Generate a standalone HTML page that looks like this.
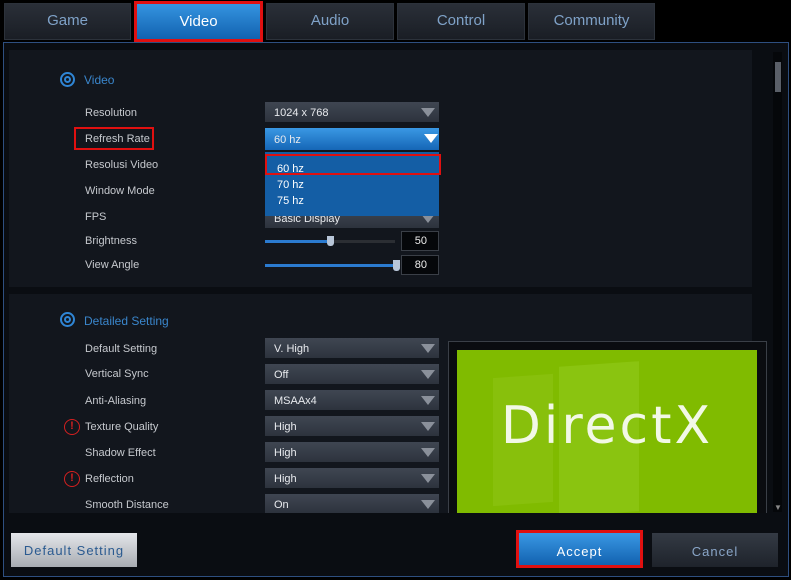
<!DOCTYPE html>
<html><head><style>
*{margin:0;padding:0;box-sizing:border-box}
body{width:791px;height:580px;background:#000;position:relative;overflow:hidden;font-family:"Liberation Sans",sans-serif;font-size:11px;color:#c8ccd2}
.a{position:absolute}
.tab{position:absolute;top:3px;height:37px;background:linear-gradient(#2a2f38,#1a1e25);border:1px solid #2c323b;color:#7fa2c8;font-size:15px;text-align:center;line-height:34px}
.dd{position:absolute;left:265px;width:174px;height:20px;background:linear-gradient(#3f4652,#2d333d);color:#e8eaee;font-size:11px;line-height:22px;padding-left:9px}
.dd:after{content:"";position:absolute;right:4px;top:6px;border-left:7px solid transparent;border-right:7px solid transparent;border-top:9px solid #8a909a}
.dd.nb:after{display:none}
.lb{position:absolute;left:85px;font-size:11px;color:#c6c9ce}
.ic{position:absolute;left:60px;width:15px;height:15px;border:2px solid #2f86d6;border-radius:50%}
.ic:after{content:"";position:absolute;left:2px;top:2px;width:7px;height:7px;border:2px solid #2f86d6;border-radius:50%;box-sizing:border-box}
.wr{position:absolute;left:64px;width:16px;height:16px;border:1.5px solid #d42020;border-radius:50%;color:#d42020;font-size:11px;font-weight:bold;text-align:center;line-height:13px}
</style></head><body>
<div class="tab" style="left:4px;width:127px">Game</div>
<div class="tab" style="left:134px;width:129px;background:linear-gradient(#3594e0,#1262b0);color:#fff;border:3px solid #e01010;line-height:36px;height:41px;top:1px">Video</div>
<div class="tab" style="left:266px;width:128px">Audio</div>
<div class="tab" style="left:397px;width:128px">Control</div>
<div class="tab" style="left:528px;width:127px">Community</div>
<div class="a" style="left:3px;top:42px;width:786px;height:535px;border:1px solid #2e4f80;background:#0a0d12"></div>
<div class="a" style="left:9px;top:50px;width:743px;height:237px;background:#12161d"></div>
<div class="a" style="left:9px;top:294px;width:743px;height:219px;background:#12161d"></div>
<div class="a" style="left:773px;top:52px;width:9px;height:460px;background:#05070a"></div>
<div class="a" style="left:775px;top:62px;width:6px;height:30px;background:#5a5f68"></div>
<div class="a" style="left:774px;top:503px;color:#888;font-size:8px">▼</div>

<div class="ic" style="top:72px"></div>
<div class="a" style="left:84px;top:73px;color:#3a86cc;font-size:12px">Video</div>
<div class="lb" style="top:107px">Resolution</div>
<div class="lb" style="top:133px">Refresh Rate</div>
<div class="a" style="left:74px;top:127px;width:80px;height:23px;border:2px solid #e01010"></div>
<div class="lb" style="top:159px">Resolusi Video</div>
<div class="lb" style="top:185px">Window Mode</div>
<div class="lb" style="top:211px">FPS</div>
<div class="lb" style="top:235px">Brightness</div>
<div class="lb" style="top:259px">View Angle</div>

<div class="dd" style="top:102px">1024 x 768</div>
<div class="dd nb" style="top:128px;background:linear-gradient(#3a98e4,#1566b6);height:22px;line-height:24px">60 hz</div>
<div class="a" style="left:424px;top:134px;border-left:7px solid transparent;border-right:7px solid transparent;border-top:9px solid #fff"></div>
<div class="dd" style="top:208px">Basic Display</div>
<div class="a" style="left:265px;top:152px;width:174px;height:64px;background:#145ea5"></div>
<div class="a" style="left:265px;top:154px;width:176px;height:21px;border:2px solid #e01010"></div>
<div class="a" style="left:277px;top:163px;color:#fff">60 hz</div>
<div class="a" style="left:277px;top:179px;color:#fff">70 hz</div>
<div class="a" style="left:277px;top:195px;color:#fff">75 hz</div>

<div class="a" style="left:265px;top:240px;width:130px;height:3px;background:#2b2e33"></div>
<div class="a" style="left:265px;top:240px;width:66px;height:3px;background:#2b7bd0"></div>
<div class="a" style="left:327px;top:236px;width:7px;height:10px;background:#b8c6d8;border-radius:0 0 3px 3px"></div>
<div class="a" style="left:401px;top:231px;width:38px;height:20px;background:#05070a;border:1px solid #3a3f47;color:#eee;text-align:right;padding-right:11px;line-height:18px">50</div>
<div class="a" style="left:265px;top:264px;width:133px;height:3px;background:#2b7bd0"></div>
<div class="a" style="left:393px;top:260px;width:7px;height:11px;background:#b8c6d8;border-radius:0 0 3px 3px"></div>
<div class="a" style="left:401px;top:255px;width:38px;height:20px;background:#05070a;border:1px solid #3a3f47;color:#eee;text-align:right;padding-right:11px;line-height:18px">80</div>

<div class="ic" style="top:312px"></div>
<div class="a" style="left:84px;top:314px;color:#3a86cc;font-size:12px">Detailed Setting</div>
<div class="lb" style="top:343px">Default Setting</div>
<div class="lb" style="top:368px">Vertical Sync</div>
<div class="lb" style="top:395px">Anti-Aliasing</div>
<div class="wr" style="top:419px">!</div><div class="lb" style="top:421px">Texture Quality</div>
<div class="lb" style="top:447px">Shadow Effect</div>
<div class="wr" style="top:471px">!</div><div class="lb" style="top:473px">Reflection</div>
<div class="lb" style="top:499px">Smooth Distance</div>
<div class="dd" style="top:338px">V. High</div>
<div class="dd" style="top:364px">Off</div>
<div class="dd" style="top:390px">MSAAx4</div>
<div class="dd" style="top:416px">High</div>
<div class="dd" style="top:442px">High</div>
<div class="dd" style="top:468px">High</div>
<div class="dd" style="top:494px;height:19px">On</div>

<div class="a" style="left:448px;top:341px;width:319px;height:172px;border:1px solid #3a3f47;border-bottom:none;background:#0a0c10"></div>
<div class="a" style="left:457px;top:350px;width:300px;height:163px;background:#80bb00;overflow:hidden">
<div class="a" style="left:36px;top:26px;width:60px;height:128px;background:#88c00c;transform:skewY(-4deg)"></div>
<div class="a" style="left:102px;top:14px;width:80px;height:150px;background:#8ac410;transform:skewY(-4deg)"></div>
<div class="a" style="left:0;top:46px;width:300px;text-align:center;color:#f2f8e6;font-size:52px;letter-spacing:3px;font-family:'DejaVu Sans',sans-serif">DirectX</div>
</div>

<div class="a" style="left:11px;top:533px;width:126px;height:34px;background:linear-gradient(#e4e6ea,#a8acb2);color:#2a5a90;font-size:13px;text-align:center;line-height:36px;letter-spacing:1px">Default Setting</div>
<div class="a" style="left:516px;top:530px;width:127px;height:38px;border:3px solid #e01010;background:linear-gradient(#3a98e4,#1262b0);color:#fff;font-size:13px;text-align:center;line-height:38px;letter-spacing:1px">Accept</div>
<div class="a" style="left:652px;top:533px;width:126px;height:34px;background:linear-gradient(#343a44,#1e232b);color:#8aa6c8;font-size:13px;text-align:center;line-height:38px;letter-spacing:1px">Cancel</div>
</body></html>
